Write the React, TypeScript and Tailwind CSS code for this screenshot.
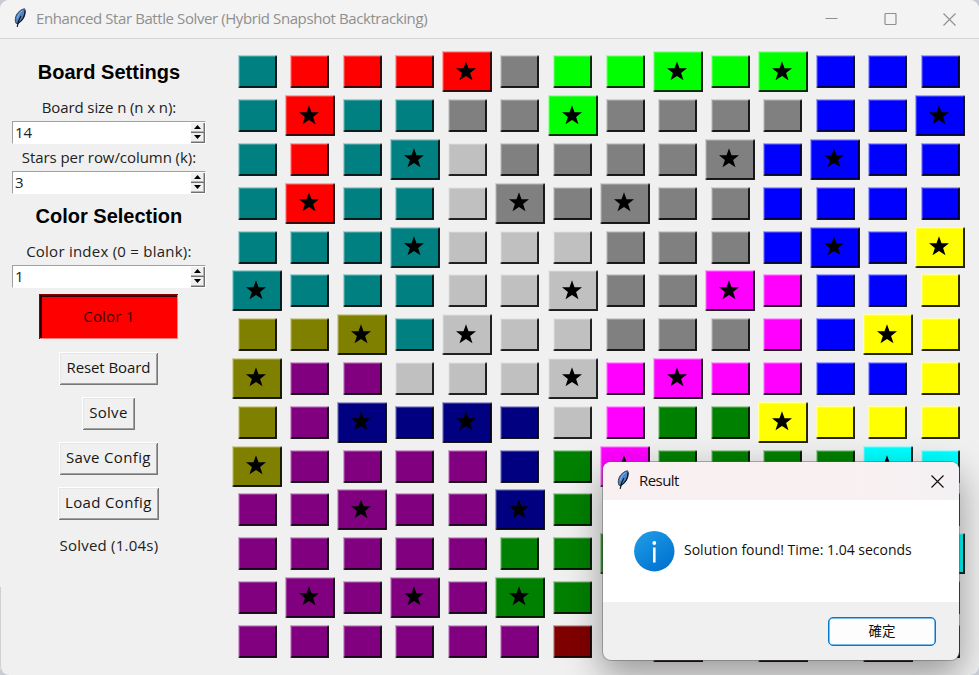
import React from "react";

const UI = "font-['Open_Sans','Noto_Sans','Noto_Sans_CJK_TC',sans-serif]";

const COLORS: Record<string, string> = {
  t: "bg-[#008080]",
  r: "bg-[#ff0000]",
  a: "bg-[#808080]",
  l: "bg-[#00ff00]",
  b: "bg-[#0000ff]",
  s: "bg-[#c0c0c0]",
  y: "bg-[#ffff00]",
  m: "bg-[#ff00ff]",
  o: "bg-[#808000]",
  p: "bg-[#800080]",
  n: "bg-[#000080]",
  g: "bg-[#008000]",
  d: "bg-[#800000]",
  c: "bg-[#00ffff]",
};

// One letter per cell; upper case marks a star.
const BOARD = [
  "trrrRallLlLbbb",
  "tRttaaLaaaabbB",
  "trtTsaaaaAbBbb",
  "tRttsAaAaabbbb",
  "tttTsssaaabBbY",
  "TtttssSaaMmbby",
  "ooOtSssaaambYy",
  "OppsssSmMmmbby",
  "opNnNnsmggYyyy",
  "OppppngMggggCc",
  "ppPppNgggggccc",
  "pppppggGgggccC",
  "pPpPpGggggcccc",
  "ppppppddDdDdDd",
];

function Feather() {
  return (
    <svg width="14" height="20" viewBox="0 0 14 20" className="block">
      <path d="M11.600.8C8 1.300 4 4.600 2.800 8.600c-.7 2.200-.7 4.500.2 6.700l1.700.2C8.500 13.500 11.300 9.500 12 5c.3-1.600.3-3-.4-4.200z" fill="#4a84cc" stroke="#3b424c" strokeWidth="1" />
      <path d="M12 2.500C12.200 8 9 13 4.800 15.500" fill="none" stroke="#14181f" strokeWidth="1.300" />
      <path d="M8 8C6 11 5 14 4.200 18.800" fill="none" stroke="#151515" strokeWidth="1.200" />
      <path d="M9.800 2.600C7.200 4 5 7 4.300 10.500" fill="none" stroke="#86b4e6" strokeWidth="1" />
    </svg>
  );
}

function Cell({ code }: { code: string }) {
  const key = code.toLowerCase();
  const star = code !== key;
  return (
    <div className="flex items-center justify-center">
      <div
        className={`flex shrink-0 items-center justify-center shadow-[inset_1px_1px_0_rgba(255,255,255,0.55),inset_-1px_-1px_0_rgba(30,30,30,0.7),inset_2px_2px_0_rgba(255,255,255,0.22),inset_-2px_-2px_0_rgba(0,0,0,0.82)] ${COLORS[key]} ${star ? "h-[41px] w-[50px]" : "h-[33px] w-[39px]"}`}
      >
        {star && (
          <svg width="20" height="20" viewBox="0 0 20 20" className="-ml-[2px] -mt-[2px]">
            <path d="M10 0.200 12.500 7.200 20 7.300 14.100 11.900 16.500 19.300 10 15 3.500 19.300 5.900 11.900 0 7.300 7.500 7.200Z" fill="#000" />
          </svg>
        )}
      </div>
    </div>
  );
}

function Heading({ text, className }: { text: string; className: string }) {
  return (
    <div className={`flex h-[24px] items-center whitespace-nowrap font-['Liberation_Sans',Arial,sans-serif] text-[20px] font-bold text-black ${className}`}>
      {text}
    </div>
  );
}

function Label({ text, className }: { text: string; className: string }) {
  return <div className={`flex h-5 items-center whitespace-nowrap pb-[2px] text-[15px] text-[#222] ${className}`}>{text}</div>;
}

function SpinButton({ up }: { up?: boolean }) {
  return (
    <div className="flex h-[10px] w-[14px] items-center justify-center bg-[#f0f0f0] shadow-[inset_-1px_-1px_0_#6f6f6f,inset_-2px_-2px_0_#b4b4b4]">
      <svg width="7" height="4" viewBox="0 0 7 4" className="-mt-px">
        <path d={up ? "M0 4 3.500 0 7 4Z" : "M0 0 3.500 4 7 0Z"} fill="#000" />
      </svg>
    </div>
  );
}

function Spinbox({ value, className }: { value: string; className: string }) {
  return (
    <div className={`flex h-[23px] w-[194px] items-center justify-between border border-b-white border-l-[#a0a0a0] border-r-white border-t-[#a0a0a0] bg-white pl-[2px] text-[15px] text-[#222] ${className}`}>
      <span>{value}</span>
      <div className="flex flex-col">
        <SpinButton up />
        <SpinButton />
      </div>
    </div>
  );
}

function Button({ text, className }: { text: string; className: string }) {
  return (
    <button className={`flex h-[33px] items-center justify-center whitespace-nowrap bg-[#f0f0f0] pb-[3px] pr-px text-[15px] text-[#161616] shadow-[inset_1px_1px_0_#ffffff,inset_-1px_-1px_0_#777777,inset_2px_2px_0_#e6e6e6,inset_-2px_-2px_0_#a0a0a0] ${className}`}>
      {text}
    </button>
  );
}

function Sidebar() {
  return (
    <aside className="flex w-[217.8px] shrink-0 flex-col items-center">
      <Heading text="Board Settings" className="mt-[21px]" />
      <Label text="Board size n (n x n):" className="mt-[14px] tracking-[-0.1px]" />
      <Spinbox value="14" className="mt-[3px]" />
      <Label text="Stars per row/column (k):" className="mt-[4px] tracking-[-0.06px]" />
      <Spinbox value="3" className="mt-[3px]" />
      <Heading text="Color Selection" className="mt-[10px]" />
      <Label text="Color index (0 = blank):" className="mt-[14px] tracking-[0.24px]" />
      <Spinbox value="1" className="mt-[3px]" />
      <div className="mt-[6px] flex h-[45px] w-[139px] items-center justify-center bg-[#ff0000] text-[15px] tracking-[0.2px] text-[#3a0000] shadow-[inset_1px_1px_0_#8a0000,inset_-1px_-1px_0_#ff8080,inset_3px_3px_0_#300000]">
        Color 1
      </div>
      <Button text="Reset Board" className="mt-[13px] w-[99px] tracking-[-0.1px]" />
      <Button text="Solve" className="mt-[12px] w-[53px] tracking-[0.3px]" />
      <Button text="Save Config" className="mt-[12px] w-[99px] tracking-[0.36px]" />
      <Button text="Load Config" className="mt-[12px] w-[101px] tracking-[0.33px]" />
      <Label text="Solved (1.04s)" className="mt-[16px] tracking-[0.22px]" />
    </aside>
  );
}

function Dialog() {
  return (
    <div className="absolute left-[603px] top-[462px] flex h-[198px] w-[356px] flex-col overflow-hidden rounded-[8px] bg-[#f0f0f0] shadow-[0_0_0_1px_rgba(90,90,90,0.45),0_14px_36px_2px_rgba(0,0,0,0.36)]">
      <div className="flex h-[38px] items-center bg-gradient-to-r from-[#f9f0f1] from-70% to-[#f3f1f3] pl-[13px] pr-[15px]">
        <div className="-mt-[2px]"><Feather /></div>
        <span className="-mt-[2px] ml-[9px] grow text-[15px] tracking-[-0.55px] text-[#111]">Result</span>
        <svg width="13" height="13" viewBox="0 0 13 13">
          <path d="M.5.5l12 12M12.500.5l-12 12" stroke="#111" strokeWidth="1.200" />
        </svg>
      </div>
      <div className="flex h-[102px] items-center bg-white pl-[31px]">
        <svg width="41" height="41" viewBox="0 0 41 41">
          <defs>
            <linearGradient id="info" x1="0.150" y1="0" x2="0.850" y2="1">
              <stop offset="0" stopColor="#1e9be6" />
              <stop offset="1" stopColor="#0070cf" />
            </linearGradient>
          </defs>
          <circle cx="20.300" cy="20.200" r="20.200" fill="url(#info)" />
          <circle cx="20.300" cy="12" r="1.900" fill="#fff" />
          <path d="M20.300 16.500v15" stroke="#fff" strokeWidth="2.600" />
        </svg>
        <span className="ml-[9px] whitespace-nowrap pb-[4px] text-[14px] text-[#111]">Solution found! Time: 1.04 seconds</span>
      </div>
      <div className="flex h-[58px] items-center justify-end pr-[23px]">
        <button className="flex h-[29px] w-[108px] items-center justify-center rounded-[5px] border border-[#0078d4] bg-[#fdfdfd] pb-[2px] font-['Noto_Sans_CJK_TC',sans-serif] text-[13.500px] text-[#111] shadow-[inset_0_0_0_0.5px_#0078d4]">
          確定
        </button>
      </div>
    </div>
  );
}

export default function App() {
  return (
    <div className="bg-[#c9cbd3]">
      <div className={`relative flex h-[675px] w-[979px] flex-col overflow-hidden rounded-[9px] bg-[#f0f0f0] ${UI}`}>
        <header className="flex h-[39px] shrink-0 items-center border-b border-[#d6d6d6] bg-[#f3f3f3] pl-[13px] pr-[23.5px]">
          <div className="-mt-[2px]"><Feather /></div>
          <span className="-mt-[2px] ml-[9px] grow whitespace-nowrap text-[15px] tracking-[-0.410px] text-[#8f8f8f]">Enhanced Star Battle Solver (Hybrid Snapshot Backtracking)</span>
          <div className="flex items-center gap-[46px]">
            <svg width="13" height="13" viewBox="0 0 13 13"><path d="M.5 5.500h12" stroke="#8f8f8f" /></svg>
            <svg width="13" height="13" viewBox="0 0 13 13"><rect x="1" y=".5" width="11" height="11" rx="1" fill="none" stroke="#8f8f8f" strokeWidth="1.200" /></svg>
            <svg width="13" height="13" viewBox="0 0 13 13"><path d="M.5.5l12 12M12.500.5l-12 12" stroke="#8f8f8f" strokeWidth="1.100" /></svg>
          </div>
        </header>
        <main className="flex grow">
          <Sidebar />
          <div className="ml-[13.1px] mt-[11px] grid h-[613px] grid-cols-[repeat(14,52.570px)] grid-rows-[repeat(14,43.800px)]">
            {BOARD.flatMap((row, y) => row.split("").map((code, x) => <Cell key={`${x}-${y}`} code={code} />))}
          </div>
        </main>
        <div className="absolute bottom-0 left-0 h-[88px] w-3 rounded-bl-[9px] border-l border-[#d0d0d0]" />
        <Dialog />
      </div>
    </div>
  );
}
